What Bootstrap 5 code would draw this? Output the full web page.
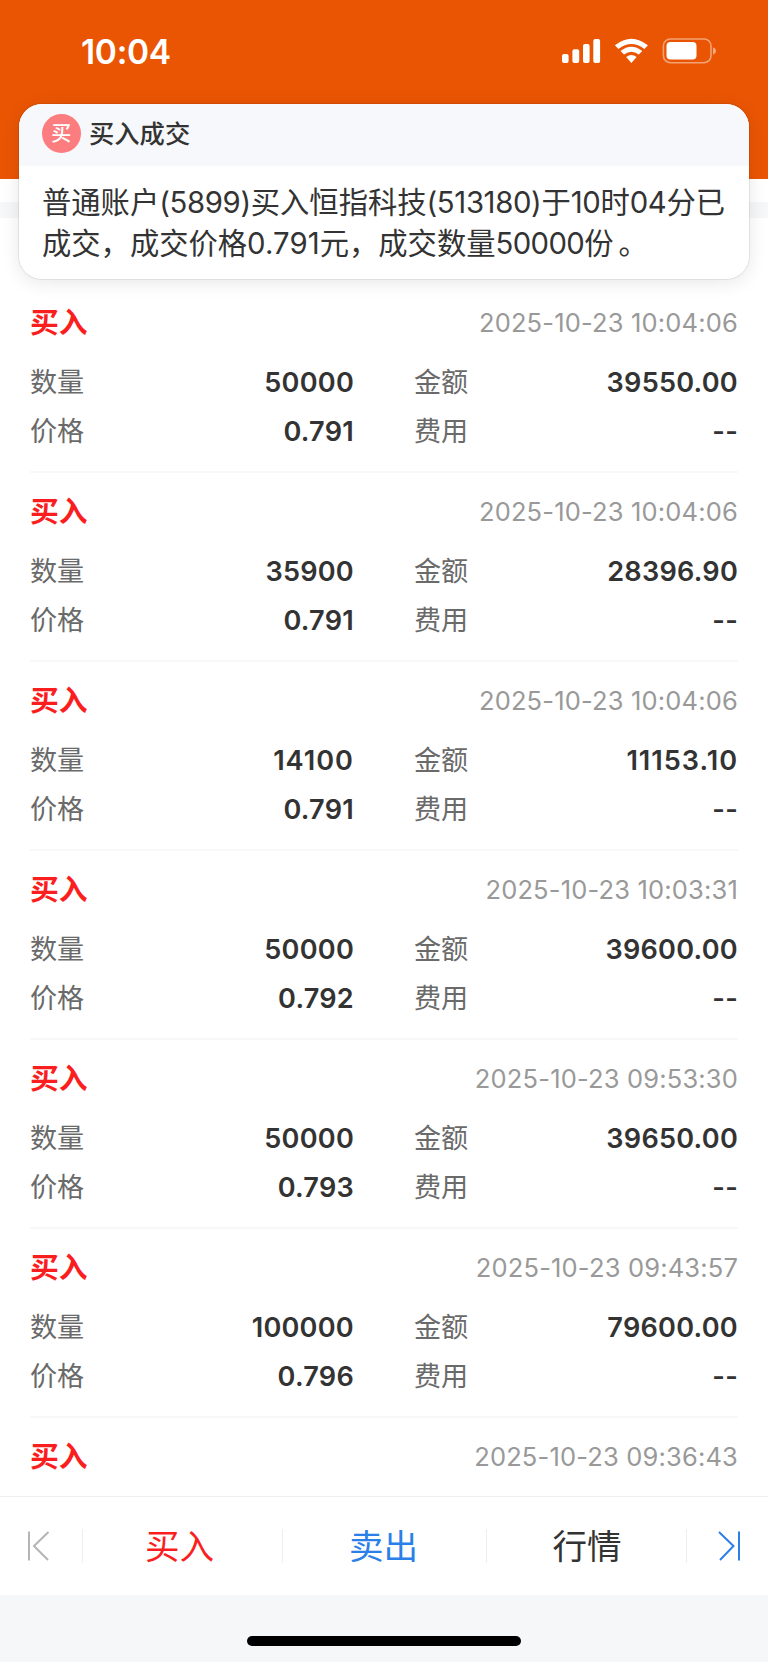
<!DOCTYPE html>
<html lang="zh-CN">
<head>
<meta charset="utf-8">
<meta name="viewport" content="width=device-width, initial-scale=1">
<title>成交记录</title>
<link href="https://cdn.jsdelivr.net/npm/bootstrap@5.3.0/dist/css/bootstrap.min.css" rel="stylesheet">
<style>
body{font-family:Inter,"Noto Sans CJK SC",sans-serif;color:#333;background:#fff;line-height:1}
.screen{width:768px;height:1663px}
.hero{height:179px;background:#ea5504}
.clock{font-size:33.5px;font-weight:600;margin:35px 0 0 81px;line-height:34px;letter-spacing:-.3px}
.sys{margin:36px 50px 0 0;height:30px}
.strip{height:16px;margin-top:23px;background:#f6f7f9}
.notice{left:18px;top:102.5px;width:732px;height:177px;border-radius:24px;background:#fff;border:1px solid rgba(0,0,0,.07);background-clip:padding-box;box-shadow:0 3px 18px rgba(0,0,0,.09)}
.notice-head{height:62px;background:#f7f8fb;padding:0 0 2px 22.5px;gap:8px;font-size:25.3px;font-weight:500}
.dot{width:39.5px;height:39.5px;background:#fc7d7f;color:#fff;font-size:20px}
.notice-body{padding:16px 0 0 23px;font-size:29.3px;line-height:41.6px}
.notice-body span{letter-spacing:-.35px}
.notice-body .price{letter-spacing:.1px}
.notice-body .count{letter-spacing:-.6px}
.notice-body .stop{margin-left:5px}
.records{padding:66px 30px 0;height:1278px}
.record{height:189px;border-bottom:2px solid #f8f8f8}
.record-top{height:74px;padding-top:4px}
.side{font-size:28.8px;font-weight:700;color:#fa1e1e}
.stamp{font-size:25.5px;color:#999;letter-spacing:.17px}
.pair{height:49.2px;font-size:27.1px}
.pair .tag{color:#6a6a6a;width:60px}
.pair b{font-weight:600;color:#333;letter-spacing:.25px}
.pair b.ones{letter-spacing:1px}
.colA,.colB{width:324px}
.tabs{height:99px;border-top:1px solid #eee;font-size:34.6px}
.sep{width:1px;height:34px;background:#eee}
.red{color:#fa1e1e}.blue{color:#2b7fe8}
.edge-l{width:82px;padding-left:27px}
.edge-r{padding-left:29.5px}
.tab-a{width:199px;padding-right:6px}
.tab-b{width:203px;padding-right:2px}
.tab-c{width:199px;padding-left:1px}
.foot{height:67px;background:#f6f7f9;padding-top:41px}
.homebar{width:274px;height:10px;border-radius:5px;background:#000}
</style>
</head>
<body>
<div class="screen position-relative overflow-hidden d-flex flex-column">
<header class="hero d-flex justify-content-between text-white flex-shrink-0">
<div class="clock">10:04</div>
<svg class="sys" width="156" viewBox="0 0 156 30" fill="#fff">
<g><rect x="0" y="18" width="6.6" height="9" rx="2"/><rect x="10.4" y="13.3" width="6.8" height="13.7" rx="2"/><rect x="21" y="8" width="6.6" height="19" rx="2"/><rect x="31.3" y="3" width="6.8" height="24" rx="2"/></g>
<path d="M52.9 9.3Q69.4-3.9 85.9 9.3L82.4 12.9Q69.4 3 56.4 12.9Z"/>
<path d="M58.5 15Q69.4 6.3 80.3 15L76.8 18.6Q69.4 13 62 18.6Z"/>
<path d="M64.2 20.9Q69.4 17 74.6 20.9L69.4 27Z"/>
<rect x="101.4" y="3" width="47.6" height="23.7" rx="7" fill="none" stroke="#fff" stroke-opacity=".45" stroke-width="1.6"/>
<rect x="104.5" y="6" width="30" height="17.6" rx="4"/><path d="M151 11.2Q154 12.5 154 15T151 18.8Z" opacity=".5"/>
</svg>
</header>
<div class="strip flex-shrink-0"></div>
<main class="records flex-shrink-0 overflow-hidden">
<section class="record"><div class="record-top d-flex justify-content-between align-items-center"><span class="side">买入</span><span class="stamp">2025-10-23 10:04:06</span></div>
<div class="pair d-flex justify-content-between"><div class="colA d-flex justify-content-between align-items-center"><span class="tag">数量</span><b>50000</b></div><div class="colB d-flex justify-content-between align-items-center"><span class="tag">金额</span><b>39550.00</b></div></div>
<div class="pair d-flex justify-content-between"><div class="colA d-flex justify-content-between align-items-center"><span class="tag">价格</span><b>0.791</b></div><div class="colB d-flex justify-content-between align-items-center"><span class="tag">费用</span><b>--</b></div></div></section>
<section class="record"><div class="record-top d-flex justify-content-between align-items-center"><span class="side">买入</span><span class="stamp">2025-10-23 10:04:06</span></div>
<div class="pair d-flex justify-content-between"><div class="colA d-flex justify-content-between align-items-center"><span class="tag">数量</span><b>35900</b></div><div class="colB d-flex justify-content-between align-items-center"><span class="tag">金额</span><b>28396.90</b></div></div>
<div class="pair d-flex justify-content-between"><div class="colA d-flex justify-content-between align-items-center"><span class="tag">价格</span><b>0.791</b></div><div class="colB d-flex justify-content-between align-items-center"><span class="tag">费用</span><b>--</b></div></div></section>
<section class="record"><div class="record-top d-flex justify-content-between align-items-center"><span class="side">买入</span><span class="stamp">2025-10-23 10:04:06</span></div>
<div class="pair d-flex justify-content-between"><div class="colA d-flex justify-content-between align-items-center"><span class="tag">数量</span><b class="ones">14100</b></div><div class="colB d-flex justify-content-between align-items-center"><span class="tag">金额</span><b class="ones">11153.10</b></div></div>
<div class="pair d-flex justify-content-between"><div class="colA d-flex justify-content-between align-items-center"><span class="tag">价格</span><b>0.791</b></div><div class="colB d-flex justify-content-between align-items-center"><span class="tag">费用</span><b>--</b></div></div></section>
<section class="record"><div class="record-top d-flex justify-content-between align-items-center"><span class="side">买入</span><span class="stamp">2025-10-23 10:03:31</span></div>
<div class="pair d-flex justify-content-between"><div class="colA d-flex justify-content-between align-items-center"><span class="tag">数量</span><b>50000</b></div><div class="colB d-flex justify-content-between align-items-center"><span class="tag">金额</span><b>39600.00</b></div></div>
<div class="pair d-flex justify-content-between"><div class="colA d-flex justify-content-between align-items-center"><span class="tag">价格</span><b>0.792</b></div><div class="colB d-flex justify-content-between align-items-center"><span class="tag">费用</span><b>--</b></div></div></section>
<section class="record"><div class="record-top d-flex justify-content-between align-items-center"><span class="side">买入</span><span class="stamp">2025-10-23 09:53:30</span></div>
<div class="pair d-flex justify-content-between"><div class="colA d-flex justify-content-between align-items-center"><span class="tag">数量</span><b>50000</b></div><div class="colB d-flex justify-content-between align-items-center"><span class="tag">金额</span><b>39650.00</b></div></div>
<div class="pair d-flex justify-content-between"><div class="colA d-flex justify-content-between align-items-center"><span class="tag">价格</span><b>0.793</b></div><div class="colB d-flex justify-content-between align-items-center"><span class="tag">费用</span><b>--</b></div></div></section>
<section class="record"><div class="record-top d-flex justify-content-between align-items-center"><span class="side">买入</span><span class="stamp">2025-10-23 09:43:57</span></div>
<div class="pair d-flex justify-content-between"><div class="colA d-flex justify-content-between align-items-center"><span class="tag">数量</span><b>100000</b></div><div class="colB d-flex justify-content-between align-items-center"><span class="tag">金额</span><b>79600.00</b></div></div>
<div class="pair d-flex justify-content-between"><div class="colA d-flex justify-content-between align-items-center"><span class="tag">价格</span><b>0.796</b></div><div class="colB d-flex justify-content-between align-items-center"><span class="tag">费用</span><b>--</b></div></div></section>
<section class="record"><div class="record-top d-flex justify-content-between align-items-center"><span class="side">买入</span><span class="stamp">2025-10-23 09:36:43</span></div></section>
</main>
<nav class="tabs d-flex align-items-center flex-shrink-0">
<div class="edge-l d-flex"><svg width="24" height="30" fill="none" stroke="#b5b5b5" stroke-width="2"><path d="M2 .5V29.5M21.500 1 7 15 21 29"/></svg></div>
<i class="sep"></i><div class="tab-a red text-center">买入</div>
<i class="sep"></i><div class="tab-b blue text-center">卖出</div>
<i class="sep"></i><div class="tab-c text-center">行情</div>
<i class="sep"></i><div class="edge-r d-flex"><svg width="24" height="30" fill="none" stroke="#2b7fe8" stroke-width="2"><path d="M22 .5V29.5M2 1 16.500 15 3 29"/></svg></div>
</nav>
<footer class="foot d-flex justify-content-center flex-shrink-0"><div class="homebar"></div></footer>
<aside class="notice position-absolute overflow-hidden">
<div class="notice-head d-flex align-items-center"><span class="dot rounded-circle d-flex align-items-center justify-content-center">买</span><span>买入成交</span></div>
<div class="notice-body text-nowrap">普通账户<span>(5899)</span>买入恒指科技<span>(513180)</span>于<span>10</span>时<span>04</span>分已<br>成交，成交价格<span class="price">0.791</span>元，成交数量<span class="count">50000</span>份<span class="stop">。</span></div>
</aside>
</div>
</body>
</html>
